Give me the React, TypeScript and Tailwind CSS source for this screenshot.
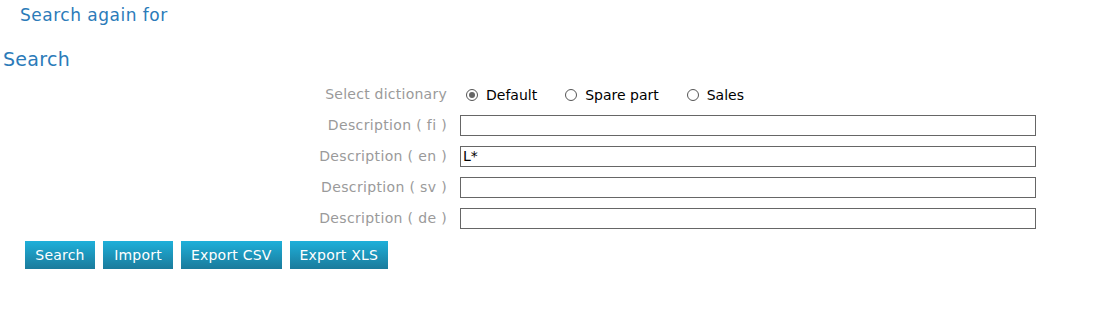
export default function App() {
  const rows = [
    { label: 'Description ( fi )', value: '' },
    { label: 'Description ( en )', value: 'L*' },
    { label: 'Description ( sv )', value: '' },
    { label: 'Description ( de )', value: '' },
  ];
  const dicts = ['Default', 'Spare part', 'Sales'];

  return (
    <div className="w-[1112px] h-[333px] bg-white" style={{ fontFamily: '"DejaVu Sans", Verdana, sans-serif' }}>
      <div className="pl-[20px] pt-[5px] text-[17px] leading-[20px] tracking-[0.5px] text-[#2b7bb9]">Search again for</div>
      <h2 className="pl-[3px] mt-[22px] text-[19px] leading-[24px] tracking-[0.3px] text-[#2b7bb9] font-normal">Search</h2>

      {/* Form */}
      <div className="mt-[12px] grid grid-cols-[447px_575px] gap-x-[13px] items-center">
        <div className="text-right text-[14px] tracking-[0.25px] text-[#9a9a9a] pt-[1px]">Select dictionary</div>
        <div className="flex items-center h-[22px] pt-[2px] text-[14px] text-black">
          {dicts.map((d, i) => (
            <label key={d} className="flex items-center mr-[22px] ml-[6px]">
              <span className="w-[12px] h-[12px] rounded-full border border-[#555] bg-white flex items-center justify-center mr-[8px]">
                {i === 0 && <span className="w-[6px] h-[6px] rounded-full bg-[#666]" />}
              </span>
              {d}
            </label>
          ))}
        </div>
        {rows.map((r) => (
          <div key={r.label} className="contents">
            <div className="text-right text-[14px] tracking-[0.35px] text-[#9a9a9a] mt-[10px]">{r.label}</div>
            <input
              readOnly
              value={r.value}
              className="mt-[10px] h-[21px] w-[576px] border border-[#666] px-[2px] text-[14px] text-black outline-none"
            />
          </div>
        ))}
      </div>

      {/* Buttons */}
      <div className="flex gap-[8px] pl-[25px] mt-[12px]">
        {['Search', 'Import', 'Export CSV', 'Export XLS'].map((b) => (
          <button
            key={b}
            className="h-[28px] px-[10px] min-w-[70px] text-white text-[14px] tracking-[0.2px] bg-gradient-to-b from-[#1eb0da] to-[#1a7b9c]"
          >
            {b}
          </button>
        ))}
      </div>
    </div>
  );
}
